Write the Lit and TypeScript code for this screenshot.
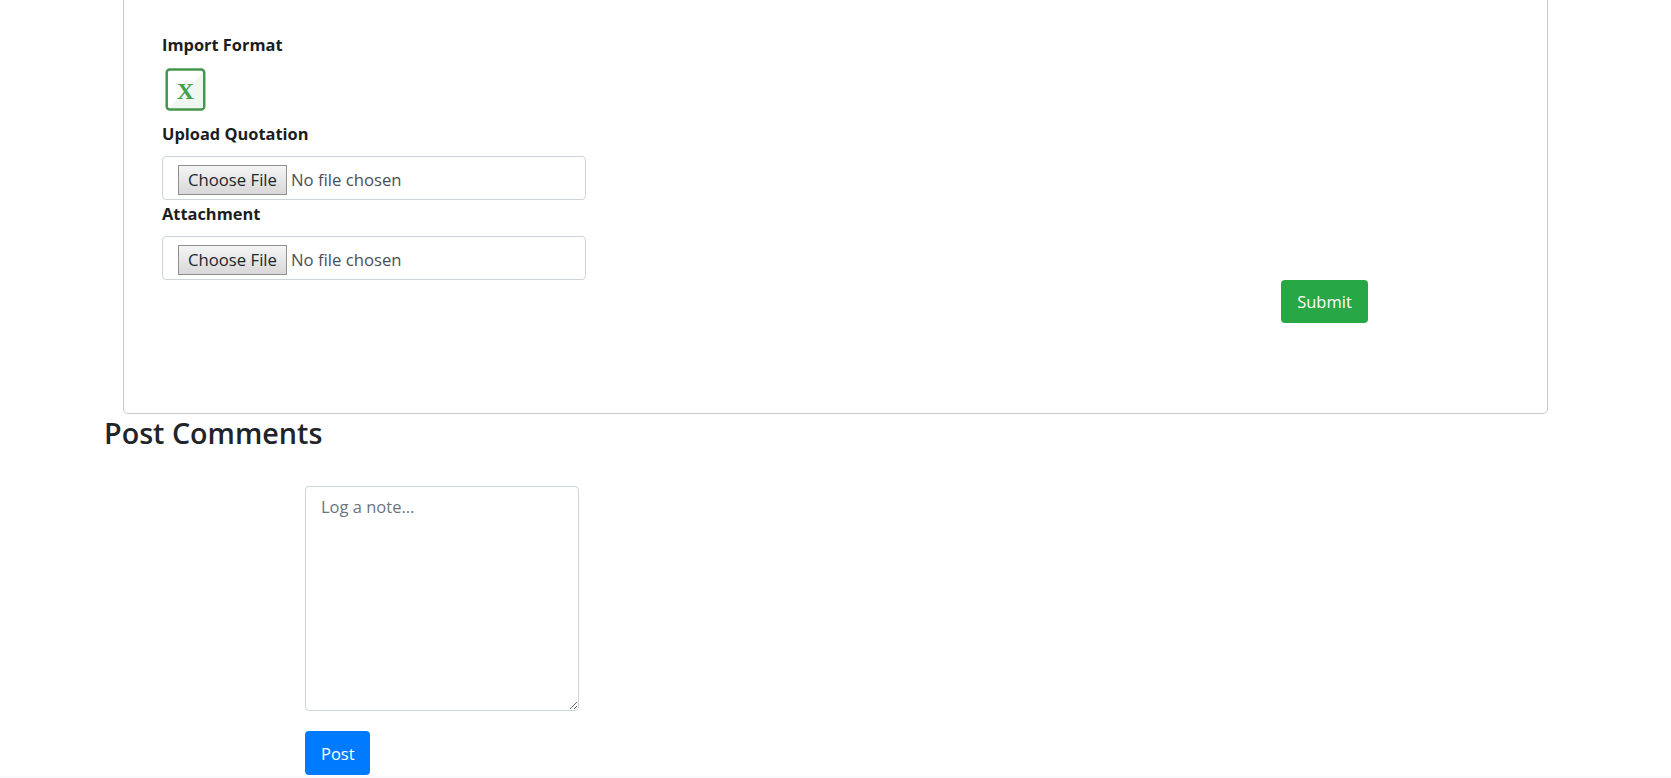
import { LitElement, html, css } from "lit";
import { customElement } from "lit/decorators.js";

@customElement("app-root")
export class AppRoot extends LitElement {
  static styles = css`
    :host {
      display: block;
      height: 778px;
      overflow: hidden;
      background: #fff;
      font-family: "Open Sans", "Noto Sans", sans-serif;
      color: #212529;
      font-size: 16.5px;
      box-sizing: border-box;
    }
    * { box-sizing: border-box; }
    .card {
      margin: -10px 0 0 123px;
      width: 1425px;
      height: 424px;
      border: 1px solid #c9c9c9;
      border-radius: 5px;
      padding: 42px 0 0 38px;
    }
    label {
      display: block;
      font-weight: 700;
      font-size: 16.4px;
      line-height: 24px;
      color: #1a1e22;
    }
    .icon { display: block; margin: 11px 0 0 3px; width: 41px; height: 43px; }
    .upload { margin-top: 11px; }
    .attach { margin-top: 2px; }
    input[type="file"] {
      display: block;
      width: 424px;
      height: 44px;
      margin-top: 10px;
      padding: 8px 15px;
      border: 1px solid #ced4da;
      border-radius: 4px;
      background: #fff;
      color: #495057;
      font: inherit;
      font-size: 16.7px;
      line-height: 28px;
    }
    input[type="file"]::file-selector-button {
      height: 30px;
      width: 109px;
      padding: 0;
      margin: 0 4px 0 0;
      border: 1px solid #8f8f8f;
      border-radius: 0;
      background: linear-gradient(#f5f5f5, #d8d8d8);
      color: #212529;
      font: inherit;
    }
    .actions { display: flex; justify-content: flex-end; padding-right: 179px; }
    .btn {
      display: block;
      border: 0;
      border-radius: 4px;
      color: #fff;
      font: inherit;
      font-size: 16.5px;
      height: 43px;
      padding: 0 16px;
    }
    .submit { background: #28a745; width: 87px; }
    .comments { padding: 0 0 0 104px; }
    h3 {
      margin: -1px 0 0;
      font-size: 28.7px;
      font-weight: 600;
      line-height: 39px;
      color: #212529;
    }
    .form { display: flex; flex-direction: column; align-items: flex-start; margin: 34px 0 0 201px; }
    textarea {
      display: block;
      width: 274px;
      height: 225px;
      padding: 8px 15px;
      border: 1px solid #ced4da;
      border-radius: 4px;
      font: inherit;
      font-size: 16.5px;
      line-height: 24px;
      margin: 0;
    }
    textarea::placeholder { color: #6c757d; opacity: 1; }
    .post { background: #007bff; width: 65px; height: 44px; margin-top: 20px; }
    .strip { height: 10px; margin-top: 1px; background: #f8f9fa; }
  `;

  render() {
    return html`
      <section class="card">
        <label>Import Format</label>
        <svg class="icon" viewBox="0 0 41 43" aria-hidden="true">
          <rect x="1.7" y="1.5" width="37.5" height="40" rx="3" fill="#fff" stroke="#43964e" stroke-width="2.5"/>
          <path d="M38 4 L38 40 L4 40 Z" fill="#f0f7f1"/>
          <text x="20.5" y="31" text-anchor="middle" font-family="Liberation Serif" font-weight="700" font-size="24" fill="#43a04e">X</text>
        </svg>
        <label class="upload">Upload Quotation</label>
        <input type="file" />
        <label class="attach">Attachment</label>
        <input type="file" />
        <div class="actions"><button class="btn submit">Submit</button></div>
      </section>
      <section class="comments">
        <h3>Post Comments</h3>
        <div class="form">
          <textarea placeholder="Log a note..."></textarea>
          <button class="btn post">Post</button>
        </div>
      </section>
      <div class="strip"></div>
    `;
  }
}
